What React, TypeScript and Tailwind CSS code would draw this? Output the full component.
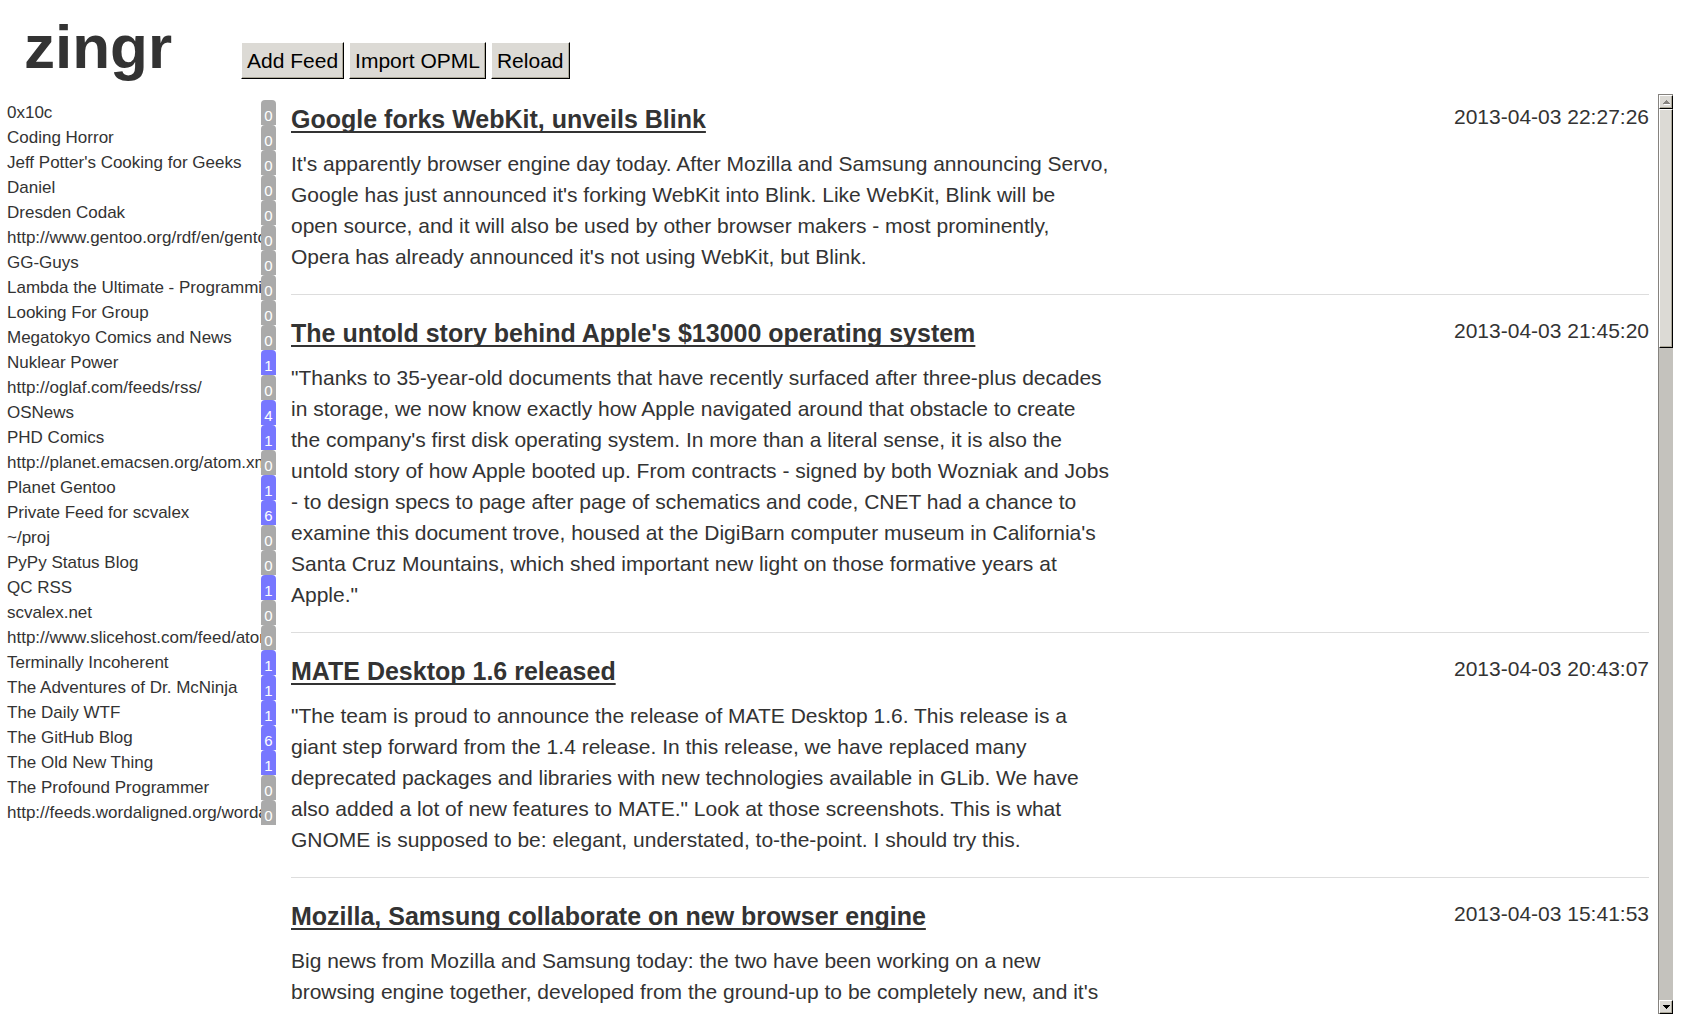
type Feed = { name: string; unread: number };
type Article = { title: string; date: string; body: string };

const feeds: Feed[] = [
  { name: "0x10c", unread: 0 },
  { name: "Coding Horror", unread: 0 },
  { name: "Jeff Potter's Cooking for Geeks", unread: 0 },
  { name: "Daniel", unread: 0 },
  { name: "Dresden Codak", unread: 0 },
  { name: "http://www.gentoo.org/rdf/en/gentoo-news.rdf", unread: 0 },
  { name: "GG-Guys", unread: 0 },
  { name: "Lambda the Ultimate - Programming Languages", unread: 0 },
  { name: "Looking For Group", unread: 0 },
  { name: "Megatokyo Comics and News", unread: 0 },
  { name: "Nuklear Power", unread: 1 },
  { name: "http://oglaf.com/feeds/rss/", unread: 0 },
  { name: "OSNews", unread: 4 },
  { name: "PHD Comics", unread: 1 },
  { name: "http://planet.emacsen.org/atom.xml", unread: 0 },
  { name: "Planet Gentoo", unread: 1 },
  { name: "Private Feed for scvalex", unread: 6 },
  { name: "~/proj", unread: 0 },
  { name: "PyPy Status Blog", unread: 0 },
  { name: "QC RSS", unread: 1 },
  { name: "scvalex.net", unread: 0 },
  { name: "http://www.slicehost.com/feed/atom.xml", unread: 0 },
  { name: "Terminally Incoherent", unread: 1 },
  { name: "The Adventures of Dr. McNinja", unread: 1 },
  { name: "The Daily WTF", unread: 1 },
  { name: "The GitHub Blog", unread: 6 },
  { name: "The Old New Thing", unread: 1 },
  { name: "The Profound Programmer", unread: 0 },
  { name: "http://feeds.wordaligned.org/wordaligned", unread: 0 },
];

const articles: Article[] = [
  {
    title: "Google forks WebKit, unveils Blink",
    date: "2013-04-03 22:27:26",
    body: `It's apparently browser engine day today. After Mozilla and Samsung announcing Servo,
Google has just announced it's forking WebKit into Blink. Like WebKit, Blink will be
open source, and it will also be used by other browser makers - most prominently,
Opera has already announced it's not using WebKit, but Blink.`,
  },
  {
    title: "The untold story behind Apple's $13000 operating system",
    date: "2013-04-03 21:45:20",
    body: `"Thanks to 35-year-old documents that have recently surfaced after three-plus decades
in storage, we now know exactly how Apple navigated around that obstacle to create
the company's first disk operating system. In more than a literal sense, it is also the
untold story of how Apple booted up. From contracts - signed by both Wozniak and Jobs
- to design specs to page after page of schematics and code, CNET had a chance to
examine this document trove, housed at the DigiBarn computer museum in California's
Santa Cruz Mountains, which shed important new light on those formative years at
Apple."`,
  },
  {
    title: "MATE Desktop 1.6 released",
    date: "2013-04-03 20:43:07",
    body: `"The team is proud to announce the release of MATE Desktop 1.6. This release is a
giant step forward from the 1.4 release. In this release, we have replaced many
deprecated packages and libraries with new technologies available in GLib. We have
also added a lot of new features to MATE." Look at those screenshots. This is what
GNOME is supposed to be: elegant, understated, to-the-point. I should try this.`,
  },
  {
    title: "Mozilla, Samsung collaborate on new browser engine",
    date: "2013-04-03 15:41:53",
    body: `Big news from Mozilla and Samsung today: the two have been working on a new
browsing engine together, developed from the ground-up to be completely new, and it's`,
  },
];

const bevel =
  "border border-t-white border-l-white border-r-black border-b-black bg-[#dcdad5] shadow-[inset_-1px_-1px_0_#aca899]";

function ToolButton({ label }: { label: string }) {
  return (
    <button type="button" className={`h-[37px] px-[5px] text-[21px] leading-[31px] text-black ${bevel}`}>
      {label}
    </button>
  );
}

function FeedRow({ feed }: { feed: Feed }) {
  return (
    <li className="flex h-[25px] justify-between">
      <a href="#" className="min-w-0 flex-1 overflow-hidden pl-[7px] text-[17px] leading-[25px] whitespace-nowrap">
        {feed.name}
      </a>
      <span
        className={`w-[15px] shrink-0 rounded-t-[4px] pt-1 text-center text-[15px] leading-6 text-white ${
          feed.unread > 0 ? "bg-[#7777ff]" : "bg-[#aaaaaa]"
        }`}
      >
        {feed.unread}
      </span>
    </li>
  );
}

function ArticleItem({ article }: { article: Article }) {
  return (
    <article className="border-b border-[#dddddd] pt-[23px] pb-[22px]">
      <header className="flex items-start justify-between">
        <h2 className="text-[25px] leading-[31px] font-bold">
          <a href="#" className="underline decoration-2 underline-offset-[3px] [text-decoration-skip-ink:none]">
            {article.title}
          </a>
        </h2>
        <time className="text-[21px] leading-[26px]">{article.date}</time>
      </header>
      <p className="mt-[13px] max-w-[860px] text-[21px] leading-[31px] whitespace-pre-line">{article.body}</p>
    </article>
  );
}

function ScrollBar() {
  return (
    <div className="flex w-[15px] shrink-0 flex-col border-t border-l border-[#86837f] bg-[#c4c2bd]">
      <button type="button" aria-label="Scroll up" className={`flex h-[14px] items-center justify-center ${bevel}`}>
        <svg width="7" height="5" viewBox="0 0 7 5" shapeRendering="crispEdges">
          <path d="M3 0h1v1h1v1h1v1h1v1H0V3h1V2h1V1h1z" fill="#86837f" />
          <path d="M1 4h6v1H1z" fill="#ffffff" />
        </svg>
      </button>
      <div className={`h-[26%] ${bevel}`} />
      <button type="button" aria-label="Scroll down" className={`mt-auto flex h-[14px] items-center justify-center ${bevel}`}>
        <svg width="7" height="4" viewBox="0 0 7 4" shapeRendering="crispEdges">
          <path d="M0 0h7v1H6v1H5v1H4v1H3V3H2V2H1V1H0z" fill="#000000" />
        </svg>
      </button>
    </div>
  );
}

export default function App() {
  return (
    <div className="flex h-screen flex-col overflow-hidden bg-white pb-[5px] font-['Liberation_Sans',Arial,sans-serif] text-[#333333]">
      <header className="flex h-[94px] shrink-0 items-start">
        <h1 className="w-[241px] shrink-0 pt-3 pl-6 text-[62px] leading-[70px] font-bold">zingr</h1>
        <div className="flex gap-[5px] pt-[42px]">
          <ToolButton label="Add Feed" />
          <ToolButton label="Import OPML" />
          <ToolButton label="Reload" />
        </div>
      </header>
      <div className="flex min-h-0 flex-1">
        <nav className="w-[276px] shrink-0 overflow-hidden pt-[6px]">
          <ul>
            {feeds.map((feed) => (
              <FeedRow key={feed.name} feed={feed} />
            ))}
          </ul>
        </nav>
        <main className="min-w-0 flex-1 overflow-hidden pr-[9px] pl-[15px]">
          <div className="-mt-[13px]">
            {articles.map((article) => (
              <ArticleItem key={article.title} article={article} />
            ))}
          </div>
        </main>
        <div className="mr-3 flex">
          <ScrollBar />
        </div>
      </div>
    </div>
  );
}
